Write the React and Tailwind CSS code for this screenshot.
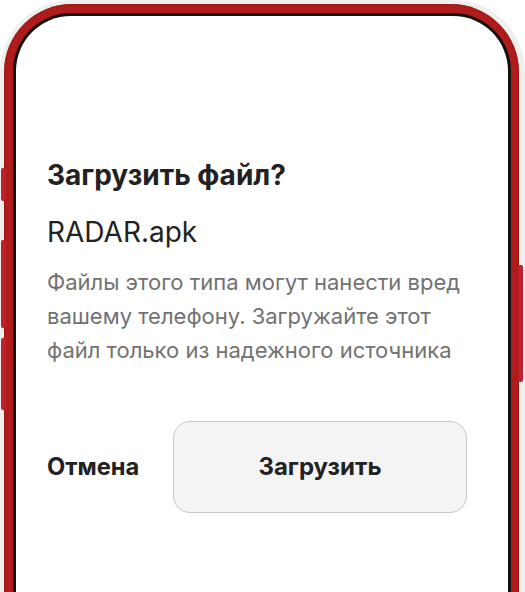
import React from 'react';

const font = { fontFamily: 'Inter, "Noto Sans", sans-serif' };

const SideButton = ({ className }) => (
  <div className={`absolute w-[5px] rounded-[2px] bg-[#c0202c] ${className}`} />
);

const App = () => {
  return (
    <div className="relative w-[525px] h-[592px] overflow-hidden bg-white" style={font}>
      {/* side buttons */}
      <SideButton className="left-[1px] top-[168px] h-[33px]" />
      <SideButton className="left-[1px] top-[240px] h-[88px]" />
      <SideButton className="left-[1px] top-[338px] h-[72px]" />
      <SideButton className="left-[518px] top-[265px] h-[117px]" />

      {/* phone shell */}
      <div className="w-[525px] h-[720px] pl-[4px] pr-[6px] pt-[4px] rounded-[72px] bg-[#efefef]">
        <div className="h-full pl-[9px] pr-[8px] pt-[9px] rounded-[68px] bg-[#b01b1b] shadow-[inset_0_0_2px_#7a0f0f]">
          <div className="h-full p-[3px] rounded-[58px] bg-[#111]">
            <div className="h-full rounded-[55px] bg-white pl-[31px] pr-[10px] pt-[143px] flex flex-col">
              <h1 className="text-[28px] leading-[32px] font-bold text-[#222]">Загрузить файл?</h1>
              <p className="mt-[25px] text-[28px] leading-[32px] text-[#222]">RADAR.apk</p>
              <p className="mt-[17px] whitespace-nowrap text-[22px] leading-[34px] text-[#727272]">
                Файлы этого типа могут нанести вред
                <br />
                вашему телефону. Загружайте этот
                <br />
                файл только из надежного источника
              </p>
              <div className="mt-[54px] flex items-center">
                <button className="w-[126px] text-left text-[23.7px] font-bold text-[#222]">Отмена</button>
                <button className="w-[294px] h-[92px] rounded-[17px] border-[1.5px] border-[#c8c8c8] bg-[#f4f4f4] text-[24px] font-bold text-[#222]">
                  Загрузить
                </button>
              </div>
            </div>
          </div>
        </div>
      </div>
    </div>
  );
};

export default App;
